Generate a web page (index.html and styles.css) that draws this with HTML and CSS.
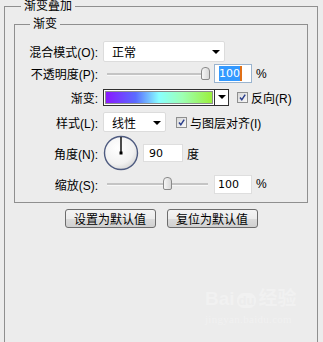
FILE: index.html
```html
<!DOCTYPE html>
<html>
<head>
    <title>渐变叠加</title>
    <link rel="stylesheet" href="styles.css">
</head>
<body>
    <fieldset class="panel">
        <legend>渐变叠加</legend>
        <fieldset class="group">
            <legend>渐变</legend>

            <div class="row row-mode">
                <label class="lbl">混合模式(<u>O</u>):</label>
                <div class="select select-mode"><span>正常</span><i class="arrow"></i></div>
            </div>

            <div class="row row-opacity">
                <label class="lbl">不透明度(<u>P</u>):</label>
                <div class="slider"><div class="thumb" style="left: 98px;"></div></div>
                <div class="num num-focus"><span class="sel">100</span><span class="caret"></span></div>
                <span class="unit">%</span>
            </div>

            <div class="row row-grad">
                <label class="lbl">渐变:</label>
                <div class="grad">
                    <div class="grad-fill"></div>
                    <div class="grad-btn"><i class="arrow"></i></div>
                </div>
                <span class="check check-reverse">
                    <svg width="11" height="11" viewBox="0 0 11 11">
                        <defs>
                            <linearGradient id="cb1" x1="0" y1="0" x2="1" y2="1">
                                <stop offset="0" stop-color="#d6d6d6"/>
                                <stop offset="1" stop-color="#fafafa"/>
                            </linearGradient>
                        </defs>
                        <rect x="0.5" y="0.5" width="10" height="10" fill="url(#cb1)" stroke="#8e8f8f"/>
                        <path d="M3 5.5 L4.8 7.8 L8.2 2.6" fill="none" stroke="#2b3f8c" stroke-width="1.5"/>
                    </svg>
                    <span>反向(<u>R</u>)</span>
                </span>
            </div>

            <div class="row row-style">
                <label class="lbl">样式(<u>L</u>):</label>
                <div class="select select-style"><span>线性</span><i class="arrow"></i></div>
                <span class="check check-align">
                    <svg width="11" height="11" viewBox="0 0 11 11">
                        <defs>
                            <linearGradient id="cb2" x1="0" y1="0" x2="1" y2="1">
                                <stop offset="0" stop-color="#d6d6d6"/>
                                <stop offset="1" stop-color="#fafafa"/>
                            </linearGradient>
                        </defs>
                        <rect x="0.5" y="0.5" width="10" height="10" fill="url(#cb2)" stroke="#8e8f8f"/>
                        <path d="M3 5.5 L4.8 7.8 L8.2 2.6" fill="none" stroke="#2b3f8c" stroke-width="1.5"/>
                    </svg>
                    <span>与图层对齐(<u>I</u>)</span>
                </span>
            </div>

            <div class="row row-angle">
                <label class="lbl">角度(<u>N</u>):</label>
                <svg class="dial" width="36" height="36" viewBox="0 0 36 36">
                    <defs>
                        <radialGradient id="dialfill" cx="0.4" cy="0.35" r="0.7">
                            <stop offset="0" stop-color="#ffffff"/>
                            <stop offset="0.7" stop-color="#f1f1f1"/>
                            <stop offset="1" stop-color="#d4d4d4"/>
                        </radialGradient>
                    </defs>
                    <circle cx="18" cy="18" r="16.5" fill="url(#dialfill)" stroke="#4e5b80" stroke-width="1.4"/>
                    <line x1="18" y1="18" x2="18" y2="2" stroke="#000" stroke-width="1.4"/>
                    <rect x="16.5" y="16.5" width="3" height="3" fill="#000"/>
                </svg>
                <div class="num num-angle">90</div>
                <span class="unit">度</span>
            </div>

            <div class="row row-scale">
                <label class="lbl">缩放(<u>S</u>):</label>
                <div class="slider"><div class="thumb" style="left: 60px;"></div></div>
                <div class="num">100</div>
                <span class="unit">%</span>
            </div>
        </fieldset>

        <div class="buttons">
            <button>设置为默认值</button>
            <button>复位为默认值</button>
        </div>
    </fieldset>

    <div class="watermark">
        <div class="wm-logo">Bai<span class="wm-du">du</span>经验</div>
        <div class="wm-url">jingyan.baidu.com</div>
    </div>
</body>
</html>
```

FILE: styles.css
```css
body {
    margin: 0;
    padding: 0;
    background: #ececec;
    font-family: "Liberation Sans", "Noto Sans CJK SC", sans-serif;
    font-size: 12px;
    color: #000;
    overflow: hidden;
    height: 342px;
    position: relative;
}

u {
    text-decoration: none;
}

fieldset {
    min-inline-size: 0;
}

legend {
    font-size: 12px;
    line-height: 12px;
    padding: 0 3px;
}

.panel {
    margin: 0 5px 0 4px;
    padding: 5px 0 0 0;
    border: 1px solid #8f8f8f;
    height: 400px;
}

.panel > legend {
    margin-left: 16px;
    line-height: 13px;
}

.group {
    margin: 0 9px;
    padding: 11px 0 5px 0;
    border: 1px solid #8f8f8f;
}

.group > legend {
    margin-left: 15px;
}

.row {
    display: flex;
    align-items: center;
}

.row-mode { height: 21px; }
.row-opacity { height: 23px; }
.row-grad { height: 24px; }
.row-style { height: 26px; }
.row-angle { height: 36px; }
.row-scale { height: 26px; }

.lbl {
    width: 83px;
    margin-right: 5px;
    text-align: right;
    white-space: nowrap;
}

.select {
    position: relative;
    display: flex;
    align-items: center;
    box-sizing: border-box;
    background: #fff;
    border: 1px solid #dcdcdc;
    border-radius: 2px;
    padding-left: 8px;
}

.select-mode {
    width: 122px;
    height: 21px;
}

.select-style {
    width: 63px;
    height: 20px;
}

.arrow {
    width: 0;
    height: 0;
    border-left: 4px solid transparent;
    border-right: 4px solid transparent;
    border-top: 4px solid #000;
}

.select .arrow {
    position: absolute;
    right: 4px;
    top: 8px;
}

.slider {
    position: relative;
    width: 108px;
    height: 16px;
}

.slider::before {
    content: "";
    position: absolute;
    left: 4px;
    right: 3px;
    top: 7px;
    height: 2px;
    background: #c4c4c4;
    border-bottom: 1px solid #f8f8f8;
}

.thumb {
    position: absolute;
    top: 1px;
    width: 9px;
    height: 13px;
    box-sizing: border-box;
    border: 1px solid #8a8a8a;
    border-radius: 4px 4px 2px 2px;
    background: linear-gradient(to right, #f6f6f6, #d8d8d8);
}

.num {
    box-sizing: border-box;
    width: 38px;
    height: 19px;
    margin-left: 3px;
    padding-left: 3px;
    background: #fff;
    border: 1px solid #dedede;
    display: flex;
    align-items: center;
    font-family: "DejaVu Sans", sans-serif;
    font-size: 11px;
    color: #000;
}

.num-focus {
    border-color: #9ab4cf;
    padding-left: 4px;
}

.sel {
    background: #3399ff;
    color: #fff;
    line-height: 15px;
}

.caret {
    width: 2px;
    height: 15px;
    background: #e07018;
}

.num-angle {
    width: 40px;
    height: 18px;
    margin-left: 4px;
    padding-left: 5px;
}

.unit {
    margin-left: 4px;
}

.grad {
    display: flex;
    box-sizing: border-box;
    width: 126px;
    height: 17px;
    border: 1px solid #2f2f2f;
    background: #fff;
}

.grad-fill {
    flex: 1;
    margin: 1px;
    border: 1px solid #8c8c8c;
    background: linear-gradient(to right, #8a18ff 0%, #5a6cff 28%, #88ffff 50%, #9dffb4 72%, #9bf03c 100%);
}

.grad-btn {
    width: 13px;
    border-left: 1px solid #2f2f2f;
    display: flex;
    align-items: center;
    justify-content: center;
}

.check {
    display: flex;
    align-items: center;
    gap: 3px;
}

.check-reverse {
    margin-left: 8px;
}

.check-align {
    margin-left: 10px;
}

.dial {
    display: block;
}

.buttons {
    display: flex;
    justify-content: center;
    gap: 11px;
    margin-top: 6px;
}

button {
    width: 91px;
    height: 19px;
    padding: 0;
    font-family: "Noto Sans CJK SC", sans-serif;
    font-size: 12px;
    line-height: 16px;
    color: #000;
    border: 1px solid #6c6c6c;
    border-radius: 3px;
    background: linear-gradient(#f4f4f4, #ececec 50%, #dcdcdc 51%, #d0d0d0);
}

.watermark {
    position: absolute;
    left: 205px;
    top: 286px;
    color: #f1f1f1;
    font-family: "Liberation Sans", "Noto Sans CJK SC", sans-serif;
}

.wm-logo {
    font-size: 19px;
    font-weight: bold;
    line-height: 26px;
}

.wm-du {
    display: inline-block;
    margin: 0 2px;
    padding: 0 2px;
    font-size: 13px;
    line-height: 15px;
    border-radius: 7px;
    background: #f1f1f1;
    color: #ececec;
}

.wm-url {
    font-family: "Liberation Serif", serif;
    font-size: 11px;
    line-height: 14px;
    letter-spacing: 0.3px;
}
```
